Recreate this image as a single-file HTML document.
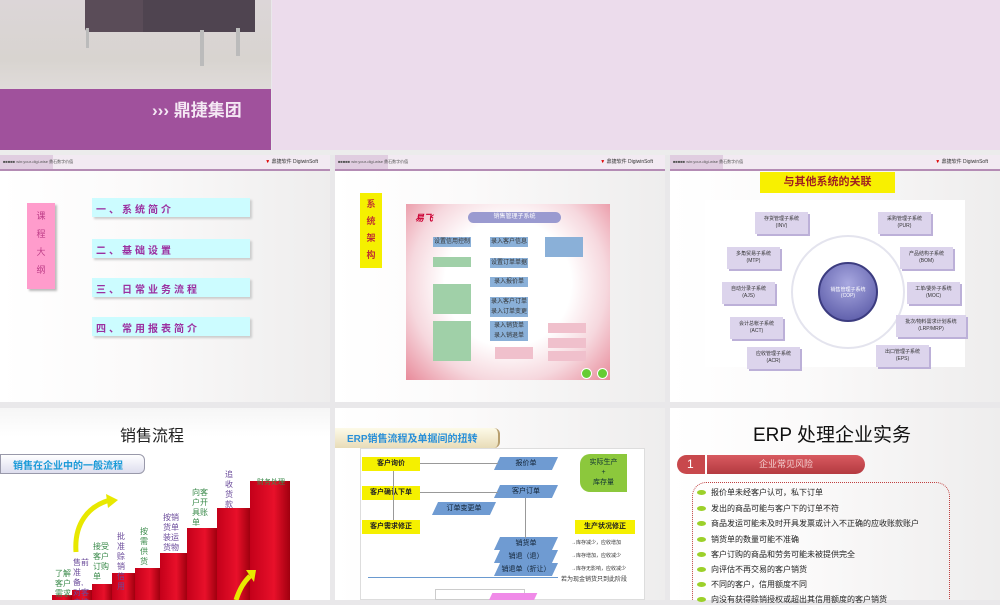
<!DOCTYPE html>
<html><head><meta charset="utf-8"><style>
*{margin:0;padding:0;box-sizing:border-box}
body{width:1000px;height:600px;overflow:hidden;background:#e9e8ea;position:relative;font-family:"Liberation Sans","Noto Sans CJK SC",sans-serif}
.a{position:absolute}
.slide{position:absolute;background:linear-gradient(90deg,#fff 0%,#fbfafa 40%,#eeeded 100%);overflow:hidden}
.hdr{position:absolute;left:0;top:0;width:100%;height:16px;background:#f2eaf2;border-bottom:2px solid #b48cb4}
.hdr .l{position:absolute;left:0;top:0;width:53px;height:14px;background:#e0cde0}
.hdr .t{position:absolute;left:3px;top:4px;font-size:4px;color:#555;white-space:nowrap}
.hdr .r{position:absolute;right:12px;top:3px;font-size:5px;color:#333;white-space:nowrap}
.hdr .r b{color:#d00}
.cy{position:absolute;background:#ccfcff;color:#9b2fa0;font-size:10px;letter-spacing:3px;padding:3px 0 0 4px;box-shadow:2px 2px 2px #ccc;font-weight:bold}
.bx{position:absolute;background:#8ab0d8;font-size:6px;color:#333;text-align:center;line-height:10px}
.yb{position:absolute;background:#f5f000;font-size:7px;color:#222;text-align:center;font-weight:bold}
.pb{position:absolute;background:#6f9bd2;font-size:7px;color:#123;text-align:center;transform:skewX(-25deg)}
.pb span{display:block;transform:skewX(25deg)}
.bar{position:absolute;bottom:0;background:linear-gradient(90deg,#c4001a,#e8102a 60%,#a0000f)}
.vt{position:absolute;font-size:8px;line-height:10px;word-break:break-all}
.sb{position:absolute;font-size:5px;color:#333;text-align:center;background:#dcd4ec;box-shadow:2px 2px 0 #bcb0d8;line-height:7px;padding-top:4px}
.li{position:absolute;left:697px;font-size:8px;color:#222;white-space:nowrap}
.li:before{content:"";display:inline-block;width:9px;height:5px;border-radius:50%;background:#9cd02a;margin-right:5px;vertical-align:middle}
</style></head><body>
<!-- top -->
<div class="a" style="left:0;top:0;width:271px;height:150px;background:linear-gradient(180deg,#dcd6d8 0,#d8d4d0 40%,#ebe6e8 88%)"></div>
<div class="a" style="left:85px;top:0;width:170px;height:32px;background:#5a4c58;border-radius:0 0 4px 4px"></div>
<div class="a" style="left:143px;top:0;width:112px;height:32px;background:#4f4450"></div>
<div class="a" style="left:200px;top:30px;width:4px;height:36px;background:#bbb"></div>
<div class="a" style="left:236px;top:28px;width:4px;height:28px;background:#bbb"></div>
<div class="a" style="left:86px;top:28px;width:3px;height:20px;background:#bbb"></div>
<div class="a" style="left:0;top:89px;width:271px;height:61px;background:#a0519c"></div>
<div class="a" style="left:152px;top:96px;color:#f4e8f4;font-size:17px;font-weight:bold;white-space:nowrap">&#x203A;&#x203A;&#x203A; 鼎捷集团</div>
<div class="a" style="left:272px;top:0;width:728px;height:150px;background:#ecdcec"></div>
<div class="a" style="left:0;top:150px;width:1000px;height:5px;background:#ececec"></div>

<!-- row2 slide1 -->
<div class="slide" style="left:0;top:155px;width:330px;height:247px">
<div class="hdr"><div class="l"></div><div class="t">■■■■■ win:your-digi-wise 鼎石数字价值</div><div class="r"><b>▼</b> 鼎捷软件 DigiwinSoft</div></div>
<div class="a" style="left:27px;top:48px;width:28px;height:86px;background:#ff9ccc;box-shadow:2px 2px 2px #bbb;color:#c0408a;font-size:9px;text-align:center;line-height:18px;padding-top:4px">课<br>程<br>大<br>纲</div>
<div class="cy" style="left:92px;top:43px;width:158px;height:19px">一、系统简介</div>
<div class="cy" style="left:92px;top:84px;width:158px;height:19px">二、基础设置</div>
<div class="cy" style="left:92px;top:123px;width:158px;height:19px">三、日常业务流程</div>
<div class="cy" style="left:92px;top:162px;width:158px;height:19px">四、常用报表简介</div>
</div>
<!-- row2 slide2 -->
<div class="slide" style="left:335px;top:155px;width:330px;height:247px">
<div class="hdr"><div class="l"></div><div class="t">■■■■■ win:your-digi-wise 鼎石数字价值</div><div class="r"><b>▼</b> 鼎捷软件 DigiwinSoft</div></div>
<div class="a" style="left:25px;top:38px;width:22px;height:75px;background:#f5f000;color:#c03030;font-size:9px;font-weight:bold;text-align:center;line-height:17px;padding-top:3px">系<br>统<br>架<br>构</div>
<div class="a" style="left:71px;top:49px;width:204px;height:176px;background:radial-gradient(circle at 50% 45%,#fff 0,#fff 45%,#f6d8de 70%,#e88a9a 100%)"></div>
<div class="a" style="left:133px;top:57px;width:93px;height:11px;background:#9a9ad0;border-radius:6px;color:#fff;font-size:6px;text-align:center;line-height:11px">销售管理子系统</div>
<div class="a" style="left:80px;top:56px;color:#c03;font-size:9px;font-weight:bold;font-style:italic">易飞</div>
<div class="bx" style="left:155px;top:82px;width:38px">录入客户信息</div>
<div class="bx" style="left:155px;top:103px;width:38px">设置订单单据</div>
<div class="bx" style="left:155px;top:122px;width:38px">录入报价单</div>
<div class="bx" style="left:155px;top:142px;width:38px;height:20px">录入客户订单<br>录入订单变更</div>
<div class="bx" style="left:155px;top:166px;width:38px;height:20px">录入销货单<br>录入销退单</div>
<div class="bx" style="left:98px;top:82px;width:38px">设置信用控制</div>
<div class="a" style="left:98px;top:102px;width:38px;height:10px;background:#a0d0a8"></div>
<div class="a" style="left:98px;top:129px;width:38px;height:30px;background:#a0d0a8"></div>
<div class="a" style="left:98px;top:166px;width:38px;height:40px;background:#a0d0a8"></div>
<div class="bx" style="left:210px;top:82px;width:38px;height:20px"></div>
<div class="bx" style="left:210px;top:105px;width:38px"></div>
<div class="bx" style="left:210px;top:142px;width:38px"></div>
<div class="a" style="left:213px;top:168px;width:38px;height:10px;background:#f0c0cc"></div>
<div class="a" style="left:213px;top:183px;width:38px;height:10px;background:#f0c0cc"></div>
<div class="a" style="left:213px;top:196px;width:38px;height:10px;background:#f0c0cc"></div>
<div class="a" style="left:160px;top:192px;width:38px;height:12px;background:#f0c0cc"></div>
<div class="a" style="left:246px;top:213px;width:11px;height:11px;border-radius:50%;background:#6c3;border:1px solid #fff"></div>
<div class="a" style="left:262px;top:213px;width:11px;height:11px;border-radius:50%;background:#6c3;border:1px solid #fff"></div>
</div>
<!-- row2 slide3 -->
<div class="slide" style="left:670px;top:155px;width:330px;height:247px">
<div class="hdr"><div class="l"></div><div class="t">■■■■■ win:your-digi-wise 鼎石数字价值</div><div class="r"><b>▼</b> 鼎捷软件 DigiwinSoft</div></div>
<div class="a" style="left:90px;top:17px;width:135px;height:21px;background:#f8f000;color:#a02020;font-size:11px;font-weight:bold;text-align:center;line-height:21px">与其他系统的关联</div>
<div class="a" style="left:35px;top:45px;width:260px;height:167px;background:#fff"></div>
<div class="a" style="left:121px;top:80px;width:114px;height:114px;border-radius:50%;border:2px solid #e4e4ee"></div>
<div class="a" style="left:148px;top:107px;width:60px;height:60px;border-radius:50%;background:radial-gradient(circle at 50% 35%,#a8a8e0,#5050a0);border:2px solid #3c3c80;color:#fff;font-size:5px;text-align:center;padding-top:22px">销售管理子系统<br>(COP)</div>
<div class="sb" style="left:85px;top:57px;width:53px;height:22px">存货管理子系统<br>(INV)</div>
<div class="sb" style="left:208px;top:57px;width:53px;height:22px">采购管理子系统<br>(PUR)</div>
<div class="sb" style="left:57px;top:92px;width:53px;height:22px">多角贸易子系统<br>(MTP)</div>
<div class="sb" style="left:230px;top:92px;width:53px;height:22px">产品结构子系统<br>(BOM)</div>
<div class="sb" style="left:52px;top:127px;width:53px;height:22px">自动分录子系统<br>(AJS)</div>
<div class="sb" style="left:237px;top:127px;width:53px;height:22px">工单/委外子系统<br>(MOC)</div>
<div class="sb" style="left:60px;top:162px;width:53px;height:22px">会计总帐子系统<br>(ACT)</div>
<div class="sb" style="left:226px;top:160px;width:70px;height:22px">批次/物料需求计划系统<br>(LRP/MRP)</div>
<div class="sb" style="left:77px;top:192px;width:53px;height:22px">应收管理子系统<br>(ACR)</div>
<div class="sb" style="left:206px;top:190px;width:53px;height:22px">出口管理子系统<br>(EPS)</div>
</div>

<!-- row3 slide1 -->
<div class="slide" style="left:0;top:408px;width:330px;height:192px;background:linear-gradient(180deg,#f6f6f6 0,#fff 15%)">
<div class="a" style="left:0;top:14px;width:330px;text-align:center;font-size:16px;color:#222"><span style="margin-left:-26px">销售流程</span></div>
<div class="a" style="left:0;top:46px;width:145px;height:20px;background:linear-gradient(#fff,#dde);border:1px solid #99a;border-radius:0 6px 6px 0;color:#1a9ad8;font-size:10px;font-weight:bold;padding:2px 0 0 12px">销售在企业中的一般流程</div>
<div class="bar" style="left:52px;top:187px;width:20px"></div>
<div class="bar" style="left:72px;top:182px;width:20px"></div>
<div class="bar" style="left:92px;top:176px;width:20px"></div>
<div class="bar" style="left:112px;top:165px;width:23px"></div>
<div class="bar" style="left:135px;top:160px;width:25px"></div>
<div class="bar" style="left:160px;top:145px;width:27px"></div>
<div class="bar" style="left:187px;top:120px;width:30px"></div>
<div class="bar" style="left:217px;top:100px;width:33px"></div>
<div class="bar" style="left:250px;top:73px;width:40px"></div>
<div class="vt" style="left:55px;top:161px;width:17px;color:#3a8a4a">了解客户需求</div>
<div class="vt" style="left:73px;top:150px;width:17px;color:#6a4a9a">售前准备,对客户推</div>
<div class="vt" style="left:93px;top:134px;width:17px;color:#3a8a4a">接受客户订购单</div>
<div class="vt" style="left:117px;top:124px;width:9px;color:#6a4a9a">批准赊销信用</div>
<div class="vt" style="left:140px;top:119px;width:9px;color:#3a8a4a">按需供货</div>
<div class="vt" style="left:163px;top:105px;width:17px;color:#6a4a9a">按销货单装运货物</div>
<div class="vt" style="left:192px;top:80px;width:17px;color:#3a8a4a">向客户开具账单</div>
<div class="vt" style="left:225px;top:62px;width:9px;color:#6a4a9a">追收货款</div>
<div class="a" style="left:257px;top:69px;font-size:7px;color:#3a8a4a">财务处理</div>
<svg class="a" style="left:70px;top:86px" width="50" height="60"><path d="M6 58 C4 30 18 12 40 6" stroke="#e8e800" stroke-width="5" fill="none"/><path d="M36 0 L48 6 L38 14Z" fill="#e8e800"/></svg>
<svg class="a" style="left:232px;top:160px" width="25" height="32"><path d="M4 32 C8 20 12 14 18 8" stroke="#e8e800" stroke-width="5" fill="none"/><path d="M14 2 L24 2 L22 14Z" fill="#e8e800"/></svg>
</div>

<!-- row3 slide2 -->
<div class="slide" style="left:335px;top:408px;width:330px;height:192px">
<div class="a" style="left:0;top:20px;width:165px;height:20px;background:linear-gradient(#fdfae8,#e8dcb8);border-radius:0 6px 6px 0;border-right:2px solid #b8a070;color:#2a90d8;font-size:10px;font-weight:bold;padding:2px 0 0 12px">ERP销售流程及单据间的扭转</div>
<div class="a" style="left:25px;top:40px;width:285px;height:152px;background:#fff;border:1px solid #ddd"></div>
<div class="yb" style="left:27px;top:49px;width:58px;height:14px;line-height:14px">客户询价</div>
<div class="yb" style="left:27px;top:78px;width:58px;height:14px;line-height:14px">客户确认下单</div>
<div class="yb" style="left:27px;top:112px;width:58px;height:14px;line-height:14px">客户需求修正</div>
<div class="pb" style="left:162px;top:49px;width:58px;height:13px;line-height:13px"><span>报价单</span></div>
<div class="pb" style="left:162px;top:77px;width:58px;height:13px;line-height:13px"><span>客户订单</span></div>
<div class="pb" style="left:100px;top:94px;width:58px;height:13px;line-height:13px"><span>订单变更单</span></div>
<div class="pb" style="left:162px;top:129px;width:58px;height:13px;line-height:13px"><span>销货单</span></div>
<div class="pb" style="left:162px;top:142px;width:58px;height:13px;line-height:13px"><span>销退（退）</span></div>
<div class="pb" style="left:162px;top:155px;width:58px;height:13px;line-height:13px"><span>销退单（折让）</span></div>
<div class="a" style="left:245px;top:46px;width:47px;height:38px;background:#8cc83c;border-radius:10px 0 0 10px;color:#133;font-size:7px;text-align:center;line-height:10px;padding-top:4px">实际生产<br>+<br>库存量</div>
<div class="yb" style="left:240px;top:112px;width:60px;height:14px;line-height:14px">生产状况修正</div>
<div class="a" style="left:236px;top:131px;font-size:5px;color:#333;white-space:nowrap">→库存减少，应收增加</div>
<div class="a" style="left:236px;top:144px;font-size:5px;color:#333;white-space:nowrap">→库存增加，应收减少</div>
<div class="a" style="left:236px;top:157px;font-size:5px;color:#333;white-space:nowrap">→库存无影响，应收减少</div>
<div class="a" style="left:33px;top:169px;width:190px;height:1px;background:#6a9ad0"></div>
<div class="a" style="left:226px;top:166px;font-size:6px;color:#333;white-space:nowrap">若为现金销货只到此阶段</div>
<div class="a" style="left:100px;top:181px;width:90px;height:11px;border:1px solid #ccc;background:#fff"></div>
<div class="a" style="left:155px;top:185px;width:45px;height:10px;background:#f08ae8;transform:skewX(-25deg)"></div>
<div class="a" style="left:58px;top:63px;width:1px;height:49px;background:#999"></div>
<div class="a" style="left:190px;top:90px;width:1px;height:40px;background:#999"></div>
<div class="a" style="left:85px;top:84px;width:78px;height:1px;background:#999"></div>
<div class="a" style="left:85px;top:55px;width:78px;height:1px;background:#999"></div>
</div>

<!-- row3 slide3 -->
<div class="slide" style="left:670px;top:408px;width:330px;height:192px">
<div class="a" style="left:0;top:12px;width:330px;text-align:center;font-size:19px;color:#111"><span style="margin-left:-6px">ERP 处理企业实务</span></div>
<div class="a" style="left:7px;top:47px;width:28px;height:19px;background:#c8484c;border-radius:10px 0 0 10px;color:#fff;font-size:12px;line-height:19px;padding-left:10px">1</div>
<div class="a" style="left:37px;top:47px;width:158px;height:19px;background:linear-gradient(#d85a60,#b43a40);border-radius:0 10px 10px 0;color:#f3d0d0;font-size:9px;text-align:center;line-height:19px">企业常见风险</div>
<div class="a" style="left:22px;top:74px;width:258px;height:130px;border:1px dotted #c04040;border-radius:14px"></div>
</div>
<div class="li" style="top:487px">报价单未经客户认可，私下订单</div>
<div class="li" style="top:503px">发出的商品可能与客户下的订单不符</div>
<div class="li" style="top:518px">商品发运可能未及时开具发票或计入不正确的应收账款账户</div>
<div class="li" style="top:534px">销货单的数量可能不准确</div>
<div class="li" style="top:549px">客户订购的商品和劳务可能未被提供完全</div>
<div class="li" style="top:564px">向评估不再交易的客户销货</div>
<div class="li" style="top:579px">不同的客户，信用额度不同</div>
<div class="li" style="top:594px">向没有获得赊销授权或超出其信用额度的客户销货</div>
</body></html>
